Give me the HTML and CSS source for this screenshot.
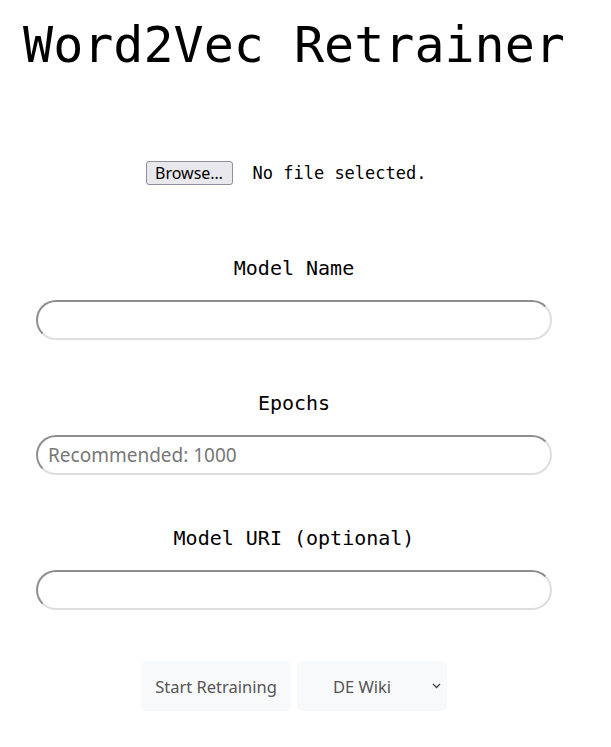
FILE: index.html
```html
<!DOCTYPE html>
<html>
<head>
<meta charset="utf-8">
<link rel="stylesheet" href="styles.css">
</head>
<body>
<main class="page">
  <h1 class="title">Word2Vec Retrainer</h1>
  <div class="file-row">
    <button class="browse" type="button">Browse…</button>
    <span class="file-status">No file selected.</span>
  </div>
  <div class="field field-first">
    <label class="field-label">Model Name</label>
    <input class="text-input" type="text">
  </div>
  <div class="field">
    <label class="field-label">Epochs</label>
    <input class="text-input" type="text" placeholder="Recommended: 1000">
  </div>
  <div class="field">
    <label class="field-label">Model URI (optional)</label>
    <input class="text-input" type="text">
  </div>
  <div class="actions">
    <button class="action-btn" type="button">Start Retraining</button>
    <div class="select-box">
      <span class="select-text">DE Wiki</span>
      <svg class="chevron" width="9" height="6" viewBox="0 0 9 6"><path d="M1 1 L4.5 4.5 L8 1" fill="none" stroke="#444" stroke-width="1.3"/></svg>
    </div>
  </div>
</main>
</body>
</html>
```
FILE: styles.css
```css
html, body {
  margin: 0;
  padding: 0;
  background: #fff;
}
.page {
  width: 588px;
  display: flex;
  flex-direction: column;
  align-items: center;
  font-family: "DejaVu Sans Mono", monospace;
  color: #000;
}
.title {
  margin: 15px 0 0;
  font-size: 50px;
  font-weight: normal;
  line-height: 60px;
  height: 60px;
  white-space: nowrap;
}
.file-row {
  margin-top: 86px;
  margin-right: 16px;
  display: flex;
  align-items: center;
  gap: 20px;
  height: 24px;
}
.browse {
  font-family: "Noto Sans", "Open Sans", sans-serif;
  font-size: 16px;
  line-height: 19px;
  padding: 1px 6px;
  width: 87px;
  height: 24px;
  background: #e9e9ed;
  border: 1px solid #8f8f9d;
  border-radius: 3px;
  color: #000;
}
.file-status {
  font-size: 17px;
}
.field {
  display: flex;
  flex-direction: column;
  align-items: center;
  width: 516px;
}
.field-label {
  font-size: 20px;
  line-height: 24px;
  margin-top: 51px;
  height: 24px;
}
.field-first .field-label {
  margin-top: 71px;
}
.text-input {
  box-sizing: border-box;
  margin-top: 20px;
  width: 516px;
  height: 40px;
  border-style: solid;
  border-width: 2px;
  border-color: #8e8e8e #dedede #dedede #8e8e8e;
  border-radius: 20px;
  padding: 0 10px;
  font-family: "Noto Sans", "Open Sans", sans-serif;
  font-size: 19px;
  outline: none;
  background: #fff;
}
.text-input::placeholder {
  color: #777;
}
.actions {
  margin-top: 51px;
  display: flex;
  gap: 6px;
}
.action-btn, .select-box {
  box-sizing: border-box;
  width: 150px;
  height: 50px;
  background: #f8f9fa;
  border: none;
  border-radius: 5px;
  font-family: "Noto Sans", "Open Sans", sans-serif;
  font-size: 16.5px;
  color: #555;
  padding: 0;
}
.select-box {
  position: relative;
  display: flex;
  align-items: center;
  justify-content: center;
  padding-right: 20px;
}
.chevron {
  position: absolute;
  right: 6px;
  top: 22px;
}
```
